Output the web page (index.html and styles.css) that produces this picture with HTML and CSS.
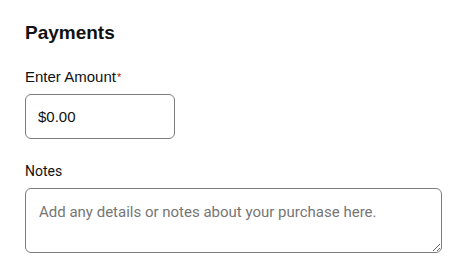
FILE: index.html
```html
<!DOCTYPE html>
<html lang="en">
<head>
<meta charset="utf-8">
<title>Payments</title>
<link rel="stylesheet" href="styles.css">
</head>
<body>
<main class="payments">
  <h2 class="payments-title">Payments</h2>
  <div class="field">
    <label class="field-label" for="amount">Enter Amount<span class="required">*</span></label>
    <input class="amount-input" id="amount" type="text" value="$0.00">
  </div>
  <div class="field notes-field">
    <label class="notes-label" for="notes">Notes</label>
    <textarea class="notes-input" id="notes" placeholder="Add any details or notes about your purchase here."></textarea>
  </div>
</main>
</body>
</html>
```

FILE: styles.css
```css
html, body {
  margin: 0;
  padding: 0;
  background: #ffffff;
}

body {
  font-family: "Liberation Sans", Arial, sans-serif;
  color: #111111;
}

.payments {
  padding: 21px 11px 0 25px;
  display: flex;
  flex-direction: column;
}

.payments-title {
  margin: 0;
  font-size: 19px;
  line-height: 24px;
  font-weight: 700;
  color: #111111;
}

.field {
  display: flex;
  flex-direction: column;
  align-items: flex-start;
  margin-top: 22px;
}

.field-label {
  font-size: 15px;
  line-height: 20px;
  margin-bottom: 7px;
  color: #111111;
}

.required {
  color: #ae1302;
  font-size: 11px;
  vertical-align: top;
  margin-left: 1px;
}

.amount-input {
  box-sizing: border-box;
  width: 150px;
  height: 45px;
  margin: 0;
  padding: 0 12px;
  border: 1px solid #7d7d7d;
  border-radius: 6px;
  font-family: "Liberation Sans", Arial, sans-serif;
  font-size: 15px;
  color: #111111;
  background: #ffffff;
  outline: none;
}

.notes-field {
  align-items: stretch;
}

.notes-label {
  font-family: Roboto, "Liberation Sans", sans-serif;
  font-size: 14px;
  line-height: 20px;
  margin-bottom: 7px;
  color: #111111;
}

.notes-input {
  box-sizing: border-box;
  width: 417px;
  height: 65px;
  margin: 0;
  padding: 13px 13px;
  border: 1px solid #7d7d7d;
  border-radius: 6px;
  font-family: Roboto, "Liberation Sans", sans-serif;
  font-size: 15px;
  line-height: 20px;
  color: #111111;
  background: #ffffff;
  resize: both;
  outline: none;
}

.notes-input::placeholder {
  color: #767676;
  opacity: 1;
}
```
